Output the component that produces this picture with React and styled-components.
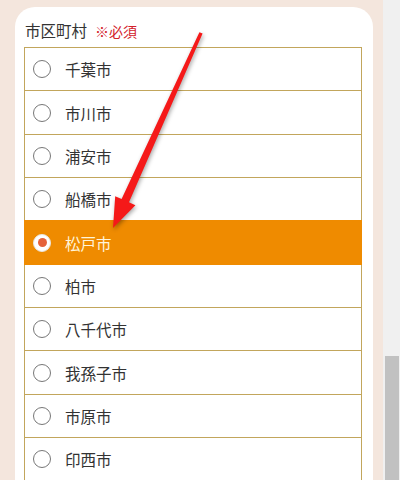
import styled, { createGlobalStyle } from 'styled-components';

const GlobalStyle = createGlobalStyle`
  body {
    margin: 0;
    font-family: "Noto Sans CJK JP", "Noto Sans", sans-serif;
    color: #333;
  }
`;

const cities = [
  '千葉市',
  '市川市',
  '浦安市',
  '船橋市',
  '松戸市',
  '柏市',
  '八千代市',
  '我孫子市',
  '市原市',
  '印西市',
];

const Page = styled.div`
  position: relative;
  display: flex;
  width: 400px;
  height: 480px;
  overflow: hidden;
`;

const Backdrop = styled.div`
  flex: 1;
  display: flex;
  flex-direction: column;
  background-color: #f4e6dd;
  padding: 7px 10px 0 15px;
`;

const Card = styled.div`
  flex: 1;
  background-color: #fff;
  border-radius: 20px 20px 0 0;
  padding: 13px 11px 0 9px;
`;

const Label = styled.div`
  display: flex;
  align-items: baseline;
  height: 21px;
  margin: 0 0 6px 1px;
  font-size: 15.5px;
  line-height: 21px;
  color: #333;
`;

const Required = styled.span`
  margin-left: 8px;
  font-size: 14px;
  color: #d3212a;
`;

const List = styled.div`
  border: 1px solid #c2a65c;
  border-bottom: none;
`;

const Row = styled.label`
  display: flex;
  align-items: center;
  gap: 14px;
  height: 42.35px;
  padding-left: 8px;
  border-bottom: 1px solid ${(props) => (props.$active ? '#ef8b00' : '#c2a65c')};
  margin: ${(props) => (props.$active ? '-1px -1px 0' : '0')};
  padding-top: ${(props) => (props.$active ? '1px' : '0')};
  padding-left: ${(props) => (props.$active ? '9px' : '8px')};
  background-color: ${(props) => (props.$active ? '#ef8b00' : '#fff')};
  color: ${(props) => (props.$active ? '#fff4da' : '#333')};
  font-size: 15.5px;
  cursor: pointer;
`;

const Radio = styled.span`
  box-sizing: border-box;
  display: flex;
  align-items: center;
  justify-content: center;
  width: 18px;
  height: 18px;
  border-radius: 50%;
  border: 1px solid ${(props) => (props.$active ? '#e9e4dc' : '#777')};
  background-color: #fff;

  &::after {
    content: '';
    display: ${(props) => (props.$active ? 'block' : 'none')};
    width: 9px;
    height: 9px;
    border-radius: 50%;
    background-color: #e5623a;
  }
`;

const ScrollTrack = styled.div`
  width: 17px;
  display: flex;
  flex-direction: column;
  background-color: #f0f0f0;
  padding-top: 356px;
`;

const ScrollThumb = styled.div`
  flex: 1;
  margin: 0 1px 0 2px;
  background-color: #c1c1c1;
`;

const Arrow = styled.svg`
  position: absolute;
  top: 0;
  left: 0;
  pointer-events: none;
  filter: drop-shadow(1px 2px 2px rgba(0, 0, 0, 0.35));
`;

const App = () => {
  const selected = '松戸市';

  return (
    <>
      <GlobalStyle />
      <Page>
        <Backdrop>
          <Card>
            <Label>
              市区町村<Required>※必須</Required>
            </Label>
            <List>
              {cities.map((city) => (
                <Row key={city} $active={city === selected}>
                  <Radio $active={city === selected} />
                  {city}
                </Row>
              ))}
            </List>
          </Card>
        </Backdrop>
        <ScrollTrack>
          <ScrollThumb />
        </ScrollTrack>
        <Arrow width="400" height="480" viewBox="0 0 400 480">
          <polygon
            points="202.6,33.6 199.4,32.2 121.6,199 115.2,196.2 113,228 135.4,205.2 129,202.2"
            fill="#f51919"
          />
        </Arrow>
      </Page>
    </>
  );
};

export default App;
